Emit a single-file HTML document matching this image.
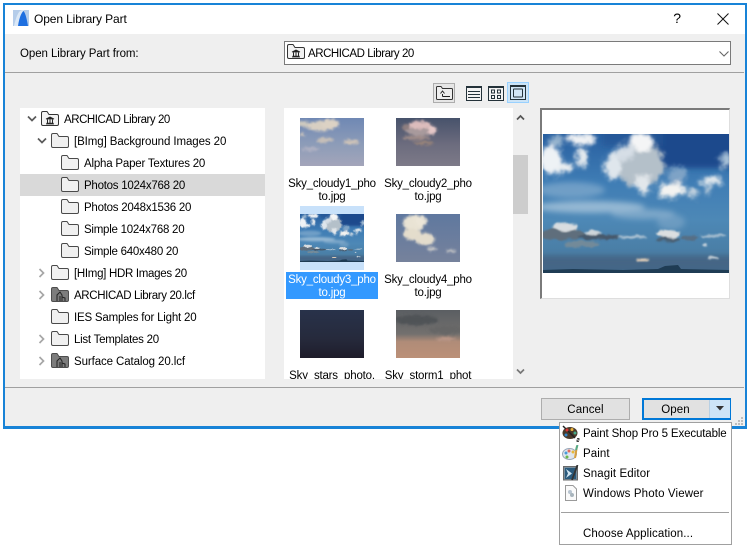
<!DOCTYPE html>
<html><head><meta charset="utf-8">
<style>
html,body{margin:0;padding:0;background:#fff;}
#r{position:relative;width:750px;height:546px;overflow:hidden;background:#fff;font:11.5px/20px "Liberation Sans",sans-serif;letter-spacing:-.2px;color:#000;}
#r div,#r svg{position:absolute;}
.t{white-space:nowrap;}
.a{letter-spacing:-.45px;}
.l{width:92px;text-align:center;line-height:13px;white-space:nowrap;letter-spacing:-.2px;}
svg{display:block;overflow:hidden;}
</style></head><body>
<div id="r">
<svg width="0" height="0" style="left:0;top:0">
<defs>
<filter id="b1" x="-30%" y="-30%" width="160%" height="160%"><feGaussianBlur in="SourceGraphic" stdDeviation="1" result="s"/><feTurbulence type="fractalNoise" baseFrequency=".22" numOctaves="2" seed="4" result="n"/><feDisplacementMap in="s" in2="n" scale="4" xChannelSelector="R" yChannelSelector="G"/><feGaussianBlur stdDeviation=".4"/></filter>
<filter id="b2" x="-30%" y="-30%" width="160%" height="160%"><feGaussianBlur stdDeviation="3"/></filter>
<filter id="c1" x="-10%" y="-10%" width="120%" height="120%"><feGaussianBlur in="SourceGraphic" stdDeviation="2.200" result="s"/><feTurbulence type="fractalNoise" baseFrequency=".09" numOctaves="3" seed="7" result="n"/><feDisplacementMap in="s" in2="n" scale="10" xChannelSelector="R" yChannelSelector="G"/><feGaussianBlur stdDeviation=".6"/></filter>
<filter id="c2" x="-10%" y="-10%" width="120%" height="120%"><feGaussianBlur in="SourceGraphic" stdDeviation=".9" result="s"/><feTurbulence type="fractalNoise" baseFrequency=".12" numOctaves="2" seed="3" result="n"/><feDisplacementMap in="s" in2="n" scale="5" xChannelSelector="R" yChannelSelector="G"/><feGaussianBlur stdDeviation=".4"/></filter>
<linearGradient id="s3" x1="0" y1="0" x2="0" y2="1"><stop offset="0" stop-color="#285fa0"/><stop offset=".35" stop-color="#3f7db5"/><stop offset=".62" stop-color="#4d88b6"/><stop offset=".85" stop-color="#4a7ea5"/><stop offset="1" stop-color="#3c6284"/></linearGradient>
<linearGradient id="s1" x1="0" y1="0" x2="0" y2="1"><stop offset="0" stop-color="#6f88b4"/><stop offset=".55" stop-color="#8d9cb8"/><stop offset="1" stop-color="#a3a5ba"/></linearGradient>
<linearGradient id="s2" x1="0" y1="0" x2="0" y2="1"><stop offset="0" stop-color="#47526b"/><stop offset=".55" stop-color="#6c6c7e"/><stop offset="1" stop-color="#7d7a88"/></linearGradient>
<linearGradient id="s4" x1="0" y1="0" x2="0" y2="1"><stop offset="0" stop-color="#5f789f"/><stop offset="1" stop-color="#76829c"/></linearGradient>
<linearGradient id="s5" x1="0" y1="0" x2="0" y2="1"><stop offset="0" stop-color="#28324a"/><stop offset=".6" stop-color="#262a3c"/><stop offset="1" stop-color="#1e1c2a"/></linearGradient>
<linearGradient id="s6" x1="0" y1="0" x2="0" y2="1"><stop offset="0" stop-color="#5a5e62"/><stop offset=".5" stop-color="#73706e"/><stop offset=".66" stop-color="#b08c78"/><stop offset="1" stop-color="#bb9078"/></linearGradient>
<g id="sky">
<rect width="186" height="139" fill="url(#s3)"/>
<g filter="url(#b2)">
<rect x="105" y="-8" width="90" height="42" fill="#1e4a8c"/>
<rect x="60" y="-8" width="60" height="20" fill="#235596" opacity=".7"/>
<ellipse cx="28" cy="56" rx="34" ry="8" fill="#a9c6dc" opacity=".45"/>
<ellipse cx="47" cy="73" rx="55" ry="6" fill="#b4cde0" opacity=".7"/>
<ellipse cx="100" cy="80" rx="32" ry="5" fill="#9cbcd6" opacity=".6"/>
<ellipse cx="128" cy="88" rx="14" ry="8" fill="#8bb0cd" opacity=".5"/>
<rect x="-8" y="122" width="202" height="14" fill="#456585"/>
</g>
<g filter="url(#c1)">
<ellipse cx="8" cy="26" rx="10" ry="15" fill="#eef2f5"/>
<ellipse cx="22" cy="33" rx="8" ry="6" fill="#e8edf0"/>
<ellipse cx="13" cy="7" rx="9" ry="4" fill="#9cb8d0"/>
<ellipse cx="38" cy="5" rx="14" ry="6" fill="#f0f2f4"/>
<ellipse cx="39" cy="24" rx="6" ry="10" fill="#e3e9ee"/>
<ellipse cx="97" cy="30" rx="25" ry="23" fill="#b4c0c9"/>
<ellipse cx="70" cy="32" rx="9" ry="13" fill="#dfe6ec"/>
<ellipse cx="82" cy="18" rx="10" ry="7" fill="#d6dee6"/>
<ellipse cx="98" cy="8" rx="11" ry="9" fill="#f4f5f6"/>
<ellipse cx="100" cy="50" rx="8" ry="9" fill="#e2e7eb"/>
<ellipse cx="134" cy="41" rx="10" ry="8" fill="#7ea3c6"/>
<ellipse cx="129" cy="56" rx="14" ry="8" fill="#f3f3f1"/>
<ellipse cx="150" cy="59" rx="5" ry="5" fill="#c4d3df"/>
<ellipse cx="169" cy="47" rx="11" ry="5" fill="#e0e7ec"/>
<ellipse cx="165" cy="56" rx="4" ry="3" fill="#bfcfdc"/>
<ellipse cx="181" cy="28" rx="5" ry="8" fill="#a9c2d8"/>
</g>
<g filter="url(#c2)">
<ellipse cx="20" cy="100" rx="22" ry="6" fill="#5f6e7c"/>
<ellipse cx="22" cy="93" rx="13" ry="4" fill="#d8dde0"/>
<ellipse cx="56" cy="103" rx="22" ry="2.800" fill="#46596a"/>
<ellipse cx="50" cy="99" rx="8" ry="2.300" fill="#cfd6da"/>
<ellipse cx="39" cy="110" rx="18" ry="3.200" fill="#738a99"/>
<ellipse cx="125" cy="100" rx="12" ry="4.500" fill="#dcdfe0"/>
<ellipse cx="125" cy="106" rx="13" ry="2" fill="#4a6074"/>
<ellipse cx="147" cy="104" rx="8" ry="2.500" fill="#566e84"/>
<ellipse cx="170" cy="102" rx="13" ry="1.800" fill="#a0bacd"/>
<ellipse cx="90" cy="103" rx="14" ry="1.800" fill="#a8bfd0"/>
<ellipse cx="162" cy="111" rx="3" ry="1.500" fill="#c7d3dc"/>
<ellipse cx="100" cy="126" rx="6" ry="1.500" fill="#e0cdb8"/>
<ellipse cx="170" cy="124" rx="6" ry="1.500" fill="#c4ced5"/>
</g>
<path d="M0 139V136L30 135 80 136 115 135 122 132 135 131 138 135 186 136V139Z" fill="#1f3c54"/>
</g>
<symbol id="fo" viewBox="0 0 18 15"><path d="M.5 2Q.5.5 2 .5H6L8 3.500H16Q17.500 3.500 17.500 5V13Q17.500 14.500 16 14.500H2Q.5 14.500.5 13Z" fill="#f0f0f0" stroke="#4a4a4a"/></symbol>
<symbol id="li" viewBox="0 0 18 15"><path d="M.5 2Q.5.5 2 .5H6L8 3.500H16Q17.500 3.500 17.500 5V13Q17.500 14.500 16 14.500H2Q.5 14.500.5 13Z" fill="#f2f2f2" stroke="#333"/><path d="M5 8L9 6 13 8ZM5 13H13M5.500 12.200H12.500" fill="#222" stroke="#222" stroke-width=".8"/><path d="M6.500 8.500V12M9 8.500V12M11.500 8.500V12" stroke="#222"/></symbol>
<symbol id="lc" viewBox="0 0 18 15"><path d="M.5 2Q.5.5 2 .5H6L8 3.500H16Q17.500 3.500 17.500 5V13Q17.500 14.500 16 14.500H2Q.5 14.500.5 13Z" fill="#7c7c7c" stroke="#4d4d4d"/><path d="M6 14V8L9 5 11 8V14M9 9V14M11 10L14 11V14" fill="none" stroke="#222" stroke-width="1"/></symbol>
<symbol id="cd" viewBox="0 0 10 8"><path d="M1 1.500L5 5.500 9 1.500" fill="none" stroke="#5a5a5a" stroke-width="1.700"/></symbol>
<symbol id="cr" viewBox="0 0 8 10"><path d="M1.500 1L5.500 5 1.500 9" fill="none" stroke="#a6a6a6" stroke-width="1.700"/></symbol>
</defs>
</svg>

<!-- window -->
<div style="left:3px;top:3px;width:744px;height:426px;background:#1883d7;"></div>
<div style="left:5px;top:5px;width:740px;height:29px;background:#fff;"></div>
<div style="left:5px;top:34px;width:740px;height:392px;background:#efefef;"></div>

<svg style="left:13px;top:10px" width="16" height="16" viewBox="0 0 16 16"><rect width="16" height="16" fill="#b5cdea"/><path d="M1 16C3 8 5 1 9 0H11C9 4 8 10 8 16Z" fill="#dbe8f6"/><path d="M5 16C6 9 8 3 10.500 1 12.500 3 14 10 15 16Z" fill="#1e6fe0"/></svg>
<div class="t" style="left:34px;top:9px;font-size:12px;letter-spacing:-.12px">Open Library Part</div>
<div class="t" style="left:673px;top:8px;font-size:14px;width:8px;text-align:center">?</div>
<svg style="left:716px;top:12px" width="14" height="14"><path d="M1.500 1.500L12.500 12.500M12.500 1.500L1.500 12.500" stroke="#111" stroke-width="1"/></svg>

<div class="t" style="left:20px;top:44px;letter-spacing:-.07px">Open Library Part from:</div>
<div style="left:284px;top:41px;width:445px;height:22px;background:#fff;border:1px solid #7a7a7a;"></div>
<svg style="left:287px;top:44px" width="18" height="15"><use href="#li"/></svg>
<div class="t a" style="left:308px;top:44px">ARCHICAD Library 20</div>
<svg style="left:718px;top:50px" width="12" height="8"><path d="M1.500 1.500L6 6 10.500 1.500" fill="none" stroke="#666" stroke-width="1.100"/></svg>
<div style="left:5px;top:72px;width:739px;height:1px;background:#a0a0a0;"></div>

<!-- toolbar -->
<div style="left:433px;top:83px;width:20px;height:18px;background:#e6e6e6;border:1px solid #adadad;"></div>
<svg style="left:436px;top:86px" width="17" height="14"><path d="M.5 1.500Q.5.5 1.500.5H5L6.500 2.500H15.500Q16.500 2.500 16.500 3.500V12.500Q16.500 13.500 15.500 13.500H1.500Q.5 13.500.5 12.500Z" fill="#eee" stroke="#333"/><path d="M14 10.500H6.500M6.500 8V10.500M4.500 7.500L6.500 5 8.500 7.500" fill="none" stroke="#222"/></svg>
<svg style="left:466px;top:86px" width="16" height="15"><rect x=".5" y=".5" width="15" height="14" fill="#f3f3f3" stroke="#24323a"/><rect x="0" y="0" width="16" height="2" fill="#24323a"/><path d="M2 5.500H14M2 8.500H14M2 11.500H14" stroke="#24323a"/></svg>
<svg style="left:488px;top:86px" width="16" height="15"><rect x=".5" y=".5" width="15" height="14" fill="#f3f3f3" stroke="#24323a"/><rect x="0" y="0" width="16" height="2" fill="#24323a"/><rect x="3.500" y="4" width="3" height="3" fill="none" stroke="#24323a"/><rect x="9.500" y="4" width="3" height="3" fill="none" stroke="#24323a"/><rect x="3.500" y="9.500" width="3" height="3" fill="none" stroke="#24323a"/><rect x="9.500" y="9.500" width="3" height="3" fill="none" stroke="#24323a"/></svg>
<div style="left:507px;top:82px;width:20px;height:19px;background:#cce4f7;border:1px solid #99d1ff;"></div>
<svg style="left:510px;top:85px" width="16" height="15"><rect x=".5" y=".5" width="15" height="14" fill="#d2e6f6" stroke="#24323a"/><rect x="0" y="0" width="16" height="2" fill="#24323a"/><rect x="3.500" y="4" width="9" height="8" rx=".5" fill="none" stroke="#24323a"/></svg>

<!-- tree -->
<div style="left:20px;top:108px;width:245px;height:271px;background:#fff;"></div>
<div style="left:20px;top:174px;width:245px;height:22px;background:#d9d9d9;"></div>

<svg style="left:27px;top:115px" width="10" height="8"><use href="#cd"/></svg>
<svg style="left:41px;top:111px" width="18" height="15"><use href="#li"/></svg>
<div class="t a" style="left:64px;top:110px">ARCHICAD Library 20</div>

<svg style="left:37px;top:137px" width="10" height="8"><use href="#cd"/></svg>
<svg style="left:51px;top:133px" width="18" height="15"><use href="#fo"/></svg>
<div class="t" style="left:74px;top:132px;letter-spacing:-.09px">[BImg] Background Images 20</div>

<svg style="left:61px;top:155px" width="18" height="15"><use href="#fo"/></svg>
<div class="t" style="left:84px;top:154px">Alpha Paper Textures 20</div>
<svg style="left:61px;top:177px" width="18" height="15"><use href="#fo"/></svg>
<div class="t" style="left:84px;top:176px;letter-spacing:-.25px">Photos 1024x768 20</div>
<svg style="left:61px;top:199px" width="18" height="15"><use href="#fo"/></svg>
<div class="t" style="left:84px;top:198px;letter-spacing:-.25px">Photos 2048x1536 20</div>
<svg style="left:61px;top:221px" width="18" height="15"><use href="#fo"/></svg>
<div class="t" style="left:84px;top:220px;letter-spacing:-.25px">Simple 1024x768 20</div>
<svg style="left:61px;top:243px" width="18" height="15"><use href="#fo"/></svg>
<div class="t" style="left:84px;top:242px;letter-spacing:-.25px">Simple 640x480 20</div>

<svg style="left:38px;top:268px" width="8" height="10"><use href="#cr"/></svg>
<svg style="left:51px;top:265px" width="18" height="15"><use href="#fo"/></svg>
<div class="t" style="left:74px;top:264px;letter-spacing:-.3px">[HImg] HDR Images 20</div>
<svg style="left:38px;top:290px" width="8" height="10"><use href="#cr"/></svg>
<svg style="left:51px;top:287px" width="18" height="15"><use href="#lc"/></svg>
<div class="t" style="left:74px;top:286px;letter-spacing:-.36px">ARCHICAD Library 20.lcf</div>
<svg style="left:51px;top:309px" width="18" height="15"><use href="#fo"/></svg>
<div class="t" style="left:74px;top:308px">IES Samples for Light 20</div>
<svg style="left:38px;top:334px" width="8" height="10"><use href="#cr"/></svg>
<svg style="left:51px;top:331px" width="18" height="15"><use href="#fo"/></svg>
<div class="t" style="left:74px;top:330px;letter-spacing:-.26px">List Templates 20</div>
<svg style="left:38px;top:356px" width="8" height="10"><use href="#cr"/></svg>
<svg style="left:51px;top:353px" width="18" height="15"><use href="#lc"/></svg>
<div class="t" style="left:74px;top:352px;letter-spacing:-.1px">Surface Catalog 20.lcf</div>

<!-- file list -->
<div style="left:284px;top:108px;width:229px;height:271px;background:#fff;overflow:hidden;" id="fl">
<svg style="left:16px;top:10px" width="64" height="48" viewBox="0 0 64 48"><rect width="64" height="48" fill="url(#s1)"/><g filter="url(#b1)"><ellipse cx="21" cy="8" rx="14" ry="5" fill="#d8cfc2"/><ellipse cx="30" cy="6" rx="9" ry="5" fill="#dcd2c4"/><ellipse cx="3" cy="6" rx="6" ry="3" fill="#cfcabf"/><ellipse cx="25" cy="22" rx="8" ry="2.500" fill="#c8c0b8"/><ellipse cx="51" cy="24" rx="8" ry="2.500" fill="#cfc4b8"/><ellipse cx="11" cy="31" rx="9" ry="1.500" fill="#b4b4c4"/><ellipse cx="2" cy="17" rx="3" ry="2" fill="#c4c0bc"/></g></svg>
<svg style="left:112px;top:10px" width="64" height="48" viewBox="0 0 64 48"><rect width="64" height="48" fill="url(#s2)"/><g filter="url(#b1)"><ellipse cx="25" cy="12" rx="16" ry="6" fill="#a89a9c"/><ellipse cx="24" cy="7" rx="11" ry="4" fill="#dcbcbc"/><ellipse cx="36" cy="12" rx="4" ry="4" fill="#e6c8c8"/><ellipse cx="10" cy="9" rx="4" ry="3" fill="#8f7f80"/><ellipse cx="20" cy="20" rx="14" ry="2" fill="#a08c88"/><ellipse cx="28" cy="25" rx="10" ry="1.500" fill="#a08878"/></g></svg>
<div class="l" style="left:2px;top:70px">Sky_cloudy1_pho<br>to.jpg</div>
<div class="l" style="left:98px;top:70px">Sky_cloudy2_pho<br>to.jpg</div>

<div style="left:16px;top:98px;width:64px;height:64px;background:#c8e1fa;"></div>
<svg style="left:16px;top:106px" width="64" height="48" viewBox="0 0 186 139" preserveAspectRatio="none"><use href="#sky"/></svg>
<svg style="left:112px;top:106px" width="64" height="48" viewBox="0 0 64 48"><rect width="64" height="48" fill="url(#s4)"/><g filter="url(#b1)"><ellipse cx="18" cy="9" rx="11" ry="8" fill="#e9e3d4"/><ellipse cx="25" cy="7" rx="6" ry="5" fill="#ece6d8"/><ellipse cx="16" cy="20" rx="9" ry="6" fill="#e4ddcc"/><ellipse cx="29" cy="25" rx="10" ry="6" fill="#e3dccc"/><ellipse cx="36" cy="35" rx="5" ry="2" fill="#c8c8c8"/><ellipse cx="55" cy="37" rx="5" ry="1.500" fill="#c8c8c8"/></g></svg>
<div style="left:2px;top:164px;width:92px;height:27px;background:#3399ff;"></div>
<div class="l" style="left:2px;top:166px;color:#fff">Sky_cloudy3_pho<br>to.jpg</div>
<div class="l" style="left:98px;top:166px">Sky_cloudy4_pho<br>to.jpg</div>

<svg style="left:16px;top:202px" width="64" height="48" viewBox="0 0 64 48"><rect width="64" height="48" fill="url(#s5)"/></svg>
<svg style="left:112px;top:202px" width="64" height="48" viewBox="0 0 64 48"><rect width="64" height="48" fill="url(#s6)"/><g filter="url(#b1)"><ellipse cx="20" cy="10" rx="22" ry="5" fill="#4f5357"/><ellipse cx="50" cy="20" rx="18" ry="4" fill="#666666"/><ellipse cx="50" cy="29" rx="10" ry="1.500" fill="#c09a8a"/></g></svg>
<div class="l" style="left:2px;top:262px">Sky_stars_photo.</div>
<div class="l" style="left:98px;top:262px">Sky_storm1_phot</div>
</div>

<!-- scrollbar -->
<div style="left:513px;top:155px;width:15px;height:59px;background:#cdcdcd;"></div>
<svg style="left:516px;top:114px" width="9" height="7"><path d="M1 5.500L4.500 2 8 5.500" fill="none" stroke="#555" stroke-width="1.700"/></svg>
<svg style="left:516px;top:368px" width="9" height="7"><path d="M1 1.500L4.500 5 8 1.500" fill="none" stroke="#777" stroke-width="1.700"/></svg>

<!-- preview -->
<div style="left:540px;top:108px;width:187px;height:188px;background:#fff;border-top:2px solid #7a7a7a;border-left:2px solid #7a7a7a;border-right:1px solid #dedede;border-bottom:1px solid #dedede;"></div>
<svg style="left:543px;top:134px" width="186" height="139" viewBox="0 0 186 139"><use href="#sky"/></svg>

<!-- bottom -->
<div style="left:5px;top:387px;width:739px;height:1px;background:#a0a0a0;"></div>
<div style="left:541px;top:398px;width:87px;height:20px;background:#e1e1e1;border:1px solid #adadad;"></div>
<div class="t" style="left:541px;top:400px;width:89px;text-align:center;letter-spacing:.1px">Cancel</div>
<div style="left:642px;top:398px;width:85px;height:18px;background:#e1e1e1;border:2px solid #0078d7;"></div>
<div style="left:709px;top:400px;width:20px;height:18px;background:#cce4f7;border-left:1px solid #b8d0e4;"></div>
<div class="t" style="left:642px;top:400px;width:67px;text-align:center;letter-spacing:.1px">Open</div>
<svg style="left:716px;top:406px" width="9" height="5"><path d="M0 0H8L4 4.500Z" fill="#333"/></svg>
<svg style="left:735px;top:417px" width="9" height="9"><g fill="#bdbdbd"><rect x="6" y="0" width="2" height="2"/><rect x="3" y="3" width="2" height="2"/><rect x="6" y="3" width="2" height="2"/><rect x="0" y="6" width="2" height="2"/><rect x="3" y="6" width="2" height="2"/><rect x="6" y="6" width="2" height="2"/></g></svg>

<!-- menu -->
<div style="left:559px;top:422px;width:171px;height:121px;background:#fff;border:1px solid #a0a0a0;"></div>
<svg style="left:562px;top:425px" width="18" height="17" viewBox="0 0 18 17"><ellipse cx="8" cy="8" rx="7.500" ry="6" fill="#4a3a2a"/><path d="M1 1L13 13" stroke="#222" stroke-width="1.500"/><circle cx="5" cy="5" r="1.500" fill="#d33"/><circle cx="10" cy="4.500" r="1.500" fill="#e9b23a"/><circle cx="13" cy="8" r="1.500" fill="#4a8"/><circle cx="4" cy="10" r="1.500" fill="#38c"/><path d="M15 13.500H17V15H15V16.500H17" fill="none" stroke="#111" stroke-width=".8"/></svg>
<div class="t" style="left:583px;top:424px;letter-spacing:-.13px">Paint Shop Pro 5 Executable</div>
<svg style="left:562px;top:445px" width="17" height="16" viewBox="0 0 17 16"><ellipse cx="7.500" cy="9" rx="7" ry="5.500" fill="#dfe6ee" stroke="#98a6b8"/><circle cx="4" cy="8" r="1.500" fill="#4a9ad8"/><circle cx="7" cy="6" r="1.500" fill="#e26a5a"/><circle cx="11" cy="7" r="1.500" fill="#e6b83a"/><circle cx="5" cy="12" r="1.500" fill="#6ab84a"/><path d="M15 1L13 13" stroke="#d8a040" stroke-width="2"/><path d="M15.500 0L14 5" stroke="#5a8" stroke-width="2"/></svg>
<div class="t" style="left:583px;top:444px;letter-spacing:.1px">Paint</div>
<svg style="left:563px;top:465px" width="16" height="16" viewBox="0 0 16 16"><rect x=".5" y="1.500" width="14" height="13.500" fill="#7a8e9c" stroke="#6a6a6a"/><path d="M2 3H13V14H2Z" fill="#2a5a7c"/><path d="M3 4L9 8.500 3 13 5 8.500Z" fill="#cfe3f0"/><path d="M14.500 0L9 15" stroke="#333" stroke-width="1.800"/></svg>
<div class="t" style="left:583px;top:464px;letter-spacing:.1px">Snagit Editor</div>
<svg style="left:565px;top:485px" width="12" height="16" viewBox="0 0 12 16"><path d="M.5.500H8L11.500 4V15.500H.5Z" fill="#fafafa" stroke="#9a9a9a"/><circle cx="5" cy="7" r="2" fill="#b8c4d0"/><circle cx="7" cy="10" r="2" fill="#a8b4bc"/></svg>
<div class="t" style="left:583px;top:484px;letter-spacing:.13px">Windows Photo Viewer</div>
<div style="left:561px;top:512px;width:168px;height:1px;background:#a0a0a0;"></div>
<div class="t" style="left:583px;top:524px;letter-spacing:.1px">Choose Application...</div>
</div>
</body></html>
